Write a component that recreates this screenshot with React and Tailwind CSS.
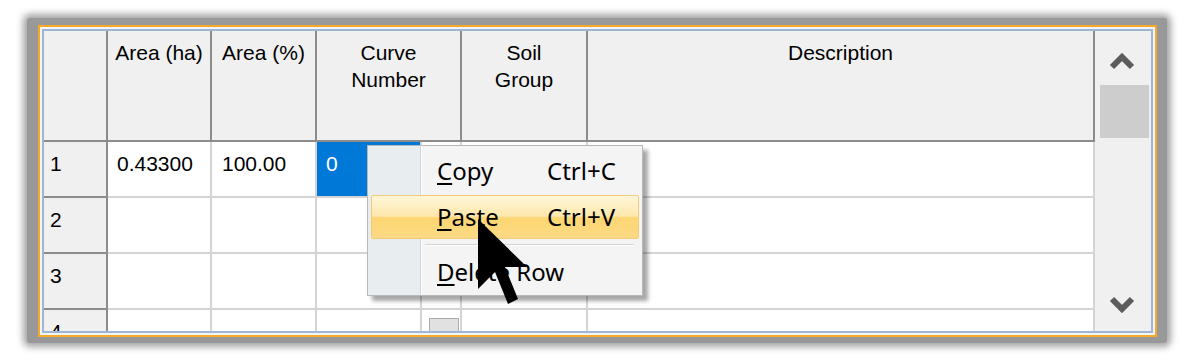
import React from 'react'

const cols = 'grid grid-cols-[64px_104px_105px_145px_126px_507px]'

const rows = [
    { n: '1', ha: '0.43300', pct: '100.00', cn: '0', selected: true },
    { n: '2' },
    { n: '3' },
    { n: '4' },
]

const Chevron = ({ down }) => (
    <svg width="26" height="18" viewBox="0 0 26 18">
        <polyline
            points={down ? '3,4 13,14 23,4' : '3,14 13,4 23,14'}
            fill="none"
            stroke="#5c5c5c"
            strokeWidth="6"
        />
    </svg>
)

const MenuItem = ({ label, mnemonic, shortcut, active }) => (
    <div
        className={
            'h-[44px] flex items-center pl-[65px] rounded-[2px] border whitespace-nowrap ' +
            (active
                ? 'border-[#f1cb77] bg-[linear-gradient(to_bottom,#fff6da_0%,#fde7ab_48%,#fdd671_52%,#fcda85_100%)]'
                : 'border-transparent')
        }
    >
        <span className={shortcut ? 'w-[110px]' : ''}>
            <u className="underline-offset-[3px]">{mnemonic}</u>
            {label}
        </span>
        {shortcut && <span>{shortcut}</span>}
    </div>
)

export default function App() {
    return (
        <div className="w-[1194px] h-[363px] bg-white pl-[27px] pt-[18px] font-['Liberation_Sans',Arial,sans-serif] text-[21px] leading-[27px] text-black">
            {/* window shadow */}
            <div className="w-[1140px] h-[325px] bg-[#999999] rounded-[3px] shadow-[0_0_7px_4px_#a5a5a5] pl-[11px] pt-[7px]">
                {/* orange focus frame */}
                <div className="w-[1119px] h-[312px] border-2 border-[#f7a928] bg-[#f2f6fa] p-[2px]">
                    <div className="h-full border-2 border-[#9eb5d3] bg-white flex relative overflow-hidden">
                        {/* grid */}
                        <div className="w-[1051px] flex flex-col">
                            <div className={cols + ' h-[111px] shrink-0 bg-[#f0f0f0]'}>
                                <div className="border-r-2 border-b-2 border-[#8c8c8c]" />
                                <div className="border-r-2 border-b-2 border-[#8c8c8c] text-center pt-[8px]">Area (ha)</div>
                                <div className="border-r-2 border-b-2 border-[#8c8c8c] text-center pt-[8px]">Area (%)</div>
                                <div className="border-r-2 border-b-2 border-[#8c8c8c] text-center pt-[8px]">Curve<br />Number</div>
                                <div className="border-r-2 border-b-2 border-[#8c8c8c] text-center pt-[8px]">Soil<br />Group</div>
                                <div className="border-r-2 border-b-2 border-[#8c8c8c] text-center pt-[8px]">Description</div>
                            </div>
                            {rows.map(r => (
                                <div key={r.n} className={cols + ' h-[56px] shrink-0'}>
                                    <div className="bg-[#f0f0f0] border-r-2 border-b-2 border-[#8c8c8c] pl-[6px] pt-[8px]">{r.n}</div>
                                    <div className="border-r-2 border-b-2 border-[#d4d4d4] pl-[9px] pt-[8px]">{r.ha}</div>
                                    <div className="border-r-2 border-b-2 border-[#d4d4d4] pl-[10px] pt-[8px]">{r.pct}</div>
                                    <div className="border-r-2 border-b-2 border-[#d4d4d4] flex">
                                        <div className={'w-[105px] border-r-2 border-[#d4d4d4] pl-[9px] pt-[8px] ' + (r.selected ? 'bg-[#0078d7] text-white' : '')}>
                                            {r.cn}
                                        </div>
                                        <div className="flex-1">
                                            <div className="ml-[7px] mt-[8px] w-[30px] h-[32px] bg-[#e1e1e1] border border-[#adadad]" />
                                        </div>
                                    </div>
                                    <div className="border-r-2 border-b-2 border-[#d4d4d4]" />
                                    <div className="border-r-2 border-b-2 border-[#d4d4d4]" />
                                </div>
                            ))}
                        </div>

                        {/* vertical scrollbar */}
                        <div className="w-[56px] bg-[#f0f0f0] flex flex-col">
                            <div className="h-[54px] flex items-center justify-center pt-[8px] pr-[2px]">
                                <Chevron />
                            </div>
                            <div className="ml-[5px] w-[49px] h-[53px] bg-[#cdcdcd]" />
                            <div className="flex-1" />
                            <div className="h-[54px] flex items-center justify-center pr-[2px]">
                                <Chevron down />
                            </div>
                        </div>

                        {/* context menu */}
                        <div className="absolute left-[323px] top-[114px] w-[276px] h-[151px] border border-[#b8b8b8] shadow-[5px_5px_4px_rgba(0,0,0,0.35)] bg-[linear-gradient(to_right,#e8edef_52px,#d2d6d8_52px,#d2d6d8_53px,#ffffff_53px,#ffffff_54px,#f4f4f4_54px)] px-[3px] pt-[3px] flex flex-col gap-[2px] font-['Noto_Sans',sans-serif] text-[24px] leading-none">
                            <MenuItem mnemonic="C" label="opy" shortcut="Ctrl+C" />
                            <MenuItem mnemonic="P" label="aste" shortcut="Ctrl+V" active />
                            <div className="h-[7px] pl-[54px] pr-[5px] flex flex-col justify-center">
                                <div className="h-px bg-[#d3d3d3]" />
                                <div className="h-px bg-white" />
                            </div>
                            <MenuItem mnemonic="D" label="elete Row" />
                        </div>

                        {/* mouse pointer */}
                        <svg className="absolute left-[433px] top-[187px]" width="52" height="88" viewBox="0 0 52 88">
                            <polygon points="1,1 1,71 18,54 31,86 41,81 28,49 50,49" fill="#000" />
                        </svg>
                    </div>
                </div>
            </div>
        </div>
    )
}
